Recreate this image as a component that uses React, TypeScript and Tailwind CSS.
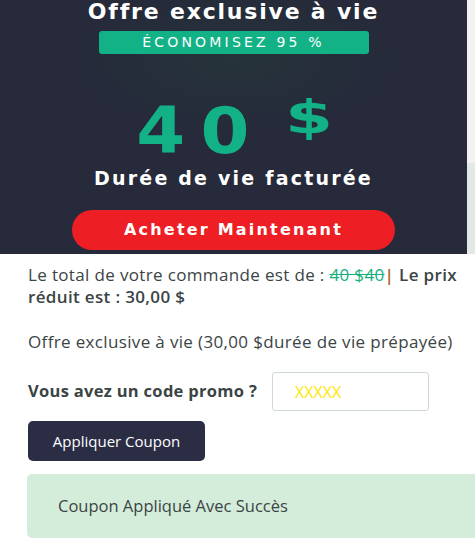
import React from "react";

export default function App() {
  return (
    <div className="w-[475px] h-[549px] bg-white overflow-hidden relative" style={{ fontFamily: '"Open Sans", sans-serif' }}>
      <div className="flex h-[254px]">
        <div className="w-[467px] h-[254px] bg-[#262a3a] flex flex-col items-center relative" style={{ background: "radial-gradient(ellipse 160px 70px at 234px 60px, #25333a 0%, #262a3a 100%)" }}>
          <div className="text-white text-[22px] font-bold leading-[26px] mt-[-1px] tracking-[1.8px]" style={{ fontFamily: '"DejaVu Sans", sans-serif' }}>
            Offre exclusive à vie
          </div>
          <div className="mt-[6px] w-[270px] h-[23px] bg-[#12b286] rounded-[3px] flex items-center justify-center text-white text-[14px] tracking-[3.2px]" style={{ fontFamily: '"DejaVu Sans", sans-serif' }}>
            ÉCONOMISEZ 95 %
          </div>
          <div className="mt-[47px] flex items-start text-[#12b286] h-[60px]" style={{ fontFamily: '"DejaVu Sans", sans-serif' }}>
            <span className="text-[64px] font-bold leading-[60px] tracking-[14px] inline-block scale-x-[1.1]">40</span>
            <span className="text-[46px] font-bold leading-[44px] ml-[33px] mt-[-6px] inline-block scale-x-[1.5]">$</span>
          </div>
          <div className="mt-[5px] text-white text-[19px] font-bold leading-[24px] tracking-[2.2px]" style={{ fontFamily: '"DejaVu Sans", sans-serif' }}>
            Durée de vie facturée
          </div>
          <div className="mt-[20px] w-[323px] h-[40px] rounded-full bg-[#ed1f24] flex items-center justify-center text-white text-[16px] font-bold tracking-[2.2px]" style={{ fontFamily: '"DejaVu Sans", sans-serif' }}>
            Acheter Maintenant
          </div>
        </div>
        <div className="flex flex-col w-[8px]">
          <div className="h-[163px] bg-[#f2f2f2]" />
          <div className="flex-1 bg-[#e2e8e6]" />
        </div>
      </div>
      <div className="pl-[28px] pr-[12px] text-[#3b4445] text-[17px] tracking-[0.35px]">
        <p className="mt-[10px] leading-[22px]">
          Le total de votre commande est de : <span className="text-[#15b07e] line-through">40 $40</span>
          <span className="font-semibold"><span className="text-[#a8591c]">|</span> Le prix réduit est : 30,00 $</span>
        </p>
        <p className="mt-[23px] leading-[22px] whitespace-nowrap">Offre exclusive à vie (30,00 $durée de vie prépayée)</p>
        <div className="mt-[19px] flex items-center">
          <span className="font-bold text-[16.5px] tracking-[0.3px]">Vous avez un code promo ?</span>
          <div className="ml-[15px] w-[157px] h-[39px] border border-[#cfd8d8] rounded-[3px] flex items-center pl-[22px] text-[#ffe600] text-[16px] tracking-normal">XXXXX</div>
        </div>
        <div className="mt-[10px] w-[177px] h-[40px] bg-[#2b2d45] rounded-[5px] flex items-center justify-center text-white text-[15px] tracking-normal">
          Appliquer Coupon
        </div>
      </div>
      <div className="ml-[27px] mt-[13px] w-[460px] h-[64px] bg-[#d4ecda] rounded-[5px] flex items-center pl-[31px] text-[#3b4445] text-[16.5px]">
        Coupon Appliqué Avec Succès
      </div>
    </div>
  );
}
